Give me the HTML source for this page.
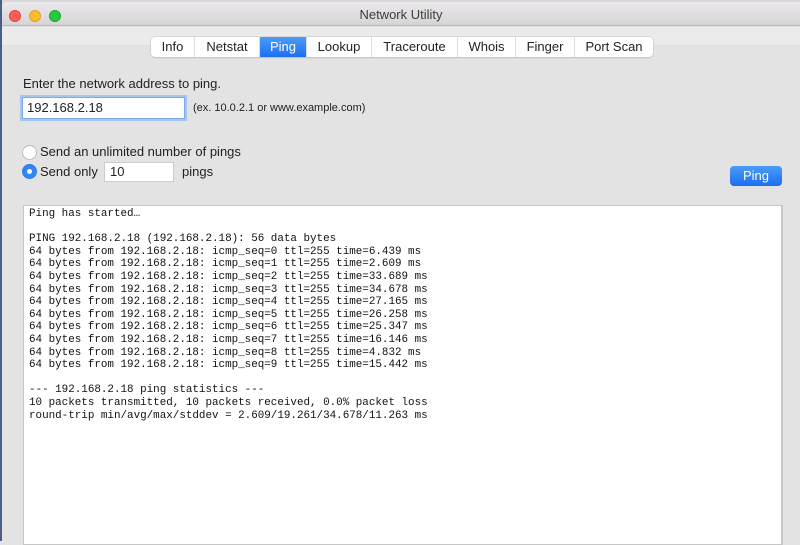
<!DOCTYPE html>
<html><head><style>
*{margin:0;padding:0;box-sizing:border-box}
body{width:800px;height:541px;overflow:hidden;background:#e3e3e3;font-family:"Liberation Sans",sans-serif;position:relative;color:#222}
.topstrip{position:absolute;left:0;top:0;width:800px;height:4px;background:#d8d8d8}
.leftedge{position:absolute;left:0;top:0;width:2px;height:541px;background:#4a5f86}
.title{position:absolute;left:2px;top:2px;width:798px;height:24px;background:linear-gradient(#ebe9eb,#d6d4d6);border-bottom:1px solid #b9b9b9;border-radius:5px 0 0 0;text-align:center;font-size:13px;line-height:25px;color:#3c3c3c}
.dot{position:absolute;top:8px;width:12px;height:12px;border-radius:50%}
.tool{position:absolute;left:2px;top:27px;width:798px;height:19px;background:#ebebeb;border-bottom:1px solid #dedede}
.tabs{position:absolute;left:151px;top:37px;height:20px;display:flex;background:#fff;border-radius:4px;box-shadow:0 0 0 0.5px #c4c4c4,0 1px 1px #bbb;font-size:13px;overflow:hidden}
.tabs div{height:20px;line-height:20px;text-align:center;border-right:1px solid #ddd;color:#222}
.tabs div.sel{background:linear-gradient(#4c9cf8,#1d6ff2);color:#fff}
.lbl{position:absolute;font-size:13px}
.input{position:absolute;left:22px;top:97px;width:163px;height:22px;background:#fff;border:1px solid #7fa9e0;box-shadow:0 0 0 2px #a5c6f3;font-size:13px;line-height:20px;padding-left:4px}
.radio{position:absolute;width:15px;height:15px;border-radius:50%;background:#fff;border:1px solid #bbb}
.num{position:absolute;left:104px;top:162px;width:70px;height:20px;background:#fff;border:1px solid #ccc;font-size:13px;line-height:18px;padding-left:5px}
.btn{position:absolute;left:730px;top:166px;width:52px;height:20px;border-radius:4px;background:linear-gradient(#4b9cf8,#1b6ef2);color:#fff;font-size:13px;text-align:center;line-height:20px}
.out{position:absolute;left:23px;top:205px;width:760px;height:340px;background:#fff;border:1px solid #c6c6c6;border-right:2px solid #c8c8c8}
pre{position:absolute;left:29px;top:208px;font-family:"Liberation Mono",monospace;font-size:10.9px;line-height:12.6px;color:#111}
</style></head><body>
<div class="topstrip"></div>
<div class="title">Network Utility
<div class="dot" style="left:7px;background:#fc5f57;border:0.5px solid #e0443e"></div>
<div class="dot" style="left:27px;background:#fdbc2e;border:0.5px solid #dea123"></div>
<div class="dot" style="left:47px;background:#28c840;border:0.5px solid #1aab29"></div>
</div>
<div class="leftedge"></div>
<div class="tool"></div>
<div class="tabs">
<div style="width:44px">Info</div><div style="width:65px">Netstat</div><div class="sel" style="width:47px">Ping</div><div style="width:65px">Lookup</div><div style="width:86px">Traceroute</div><div style="width:58px">Whois</div><div style="width:59px">Finger</div><div style="width:78px;border:0">Port Scan</div>
</div>
<div class="lbl" style="left:23px;top:76px">Enter the network address to ping.</div>
<div class="input">192.168.2.18</div>
<div class="lbl" style="left:193px;top:102px;font-size:11px">(ex. 10.0.2.1 or www.example.com)</div>
<div class="radio" style="left:22px;top:145px"></div>
<div class="lbl" style="left:40px;top:144px">Send an unlimited number of pings</div>
<div class="radio" style="left:22px;top:164px;background:#2f86f5;border-color:#2f7be6"><div style="position:absolute;left:4px;top:4px;width:5px;height:5px;border-radius:50%;background:#fff"></div></div>
<div class="lbl" style="left:40px;top:164px">Send only</div>
<div class="num">10</div>
<div class="lbl" style="left:182px;top:164px">pings</div>
<div class="btn">Ping</div>
<div class="out"></div>
<pre>Ping has started…

PING 192.168.2.18 (192.168.2.18): 56 data bytes
64 bytes from 192.168.2.18: icmp_seq=0 ttl=255 time=6.439 ms
64 bytes from 192.168.2.18: icmp_seq=1 ttl=255 time=2.609 ms
64 bytes from 192.168.2.18: icmp_seq=2 ttl=255 time=33.689 ms
64 bytes from 192.168.2.18: icmp_seq=3 ttl=255 time=34.678 ms
64 bytes from 192.168.2.18: icmp_seq=4 ttl=255 time=27.165 ms
64 bytes from 192.168.2.18: icmp_seq=5 ttl=255 time=26.258 ms
64 bytes from 192.168.2.18: icmp_seq=6 ttl=255 time=25.347 ms
64 bytes from 192.168.2.18: icmp_seq=7 ttl=255 time=16.146 ms
64 bytes from 192.168.2.18: icmp_seq=8 ttl=255 time=4.832 ms
64 bytes from 192.168.2.18: icmp_seq=9 ttl=255 time=15.442 ms

--- 192.168.2.18 ping statistics ---
10 packets transmitted, 10 packets received, 0.0% packet loss
round-trip min/avg/max/stddev = 2.609/19.261/34.678/11.263 ms</pre>
</body></html>
